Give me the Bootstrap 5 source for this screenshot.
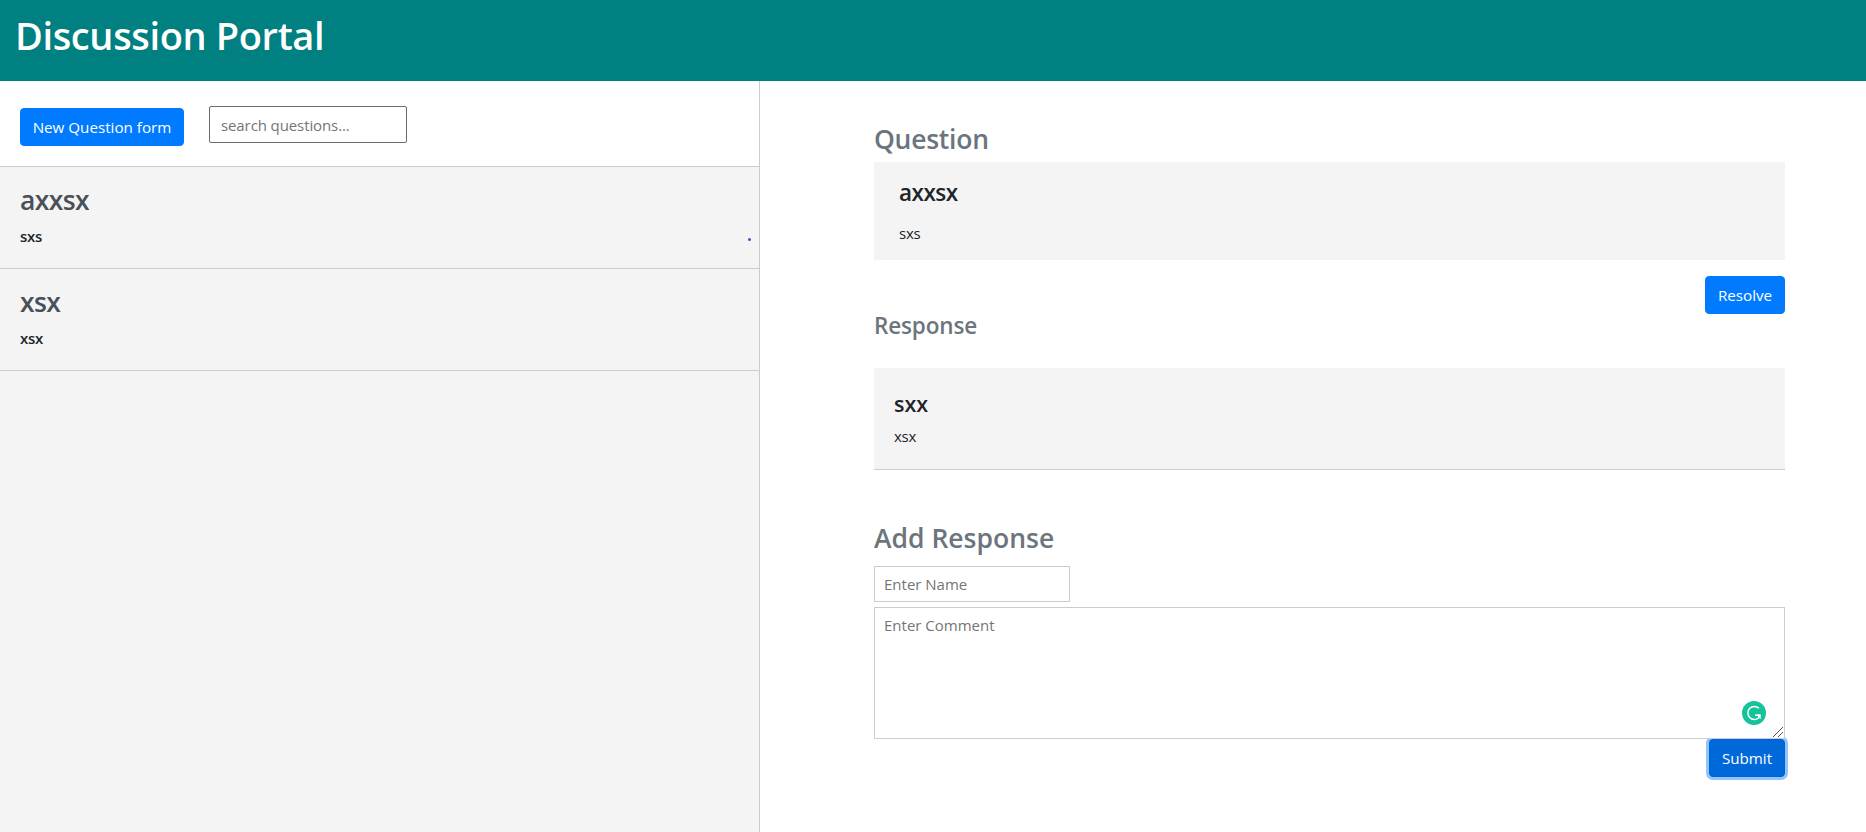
<!DOCTYPE html>
<html lang="en">
<head>
<meta charset="utf-8">
<meta name="viewport" content="width=device-width, initial-scale=1">
<title>Discussion Portal</title>
<link href="https://cdn.jsdelivr.net/npm/bootstrap@5.3.0/dist/css/bootstrap.min.css" rel="stylesheet">
<style>
body{font-family:"Segoe UI","Open Sans","Noto Sans",sans-serif;font-size:15px;line-height:24px;color:#212529;background:#fff}
h1,h2,h3,h4,p{margin:0}
h1,h2,h3,h4{font-weight:600}
.topbar{height:81px;background:teal;padding:11px 15px 0}
.topbar h1{font-size:38px;line-height:48px;letter-spacing:-.36px}
.side{width:760px;background:#f4f4f4;border-right:1px solid #ccc}
.tools{height:86px;background:#fff;border-bottom:1px solid #ccc;padding:25px 20px 0}
.btn{--bs-btn-font-size:15.2px;--bs-btn-line-height:24px;--bs-btn-border-radius:4px;height:38px;padding:6px 0;--bs-btn-bg:#007bff;--bs-btn-border-color:#007bff}
.btn-new{width:164px;margin-top:2px}
.btn-resolve{width:80px}
.btn-submit{width:76px;--bs-btn-bg:#0069d9;--bs-btn-border-color:#0062cc;box-shadow:0 0 0 3px #8fc4ff}
input,textarea{font-size:15px;line-height:24px;border:1px solid #ccc;padding:5px 9px;display:block}
input::placeholder,textarea::placeholder{color:#757575;opacity:1}
.search{width:198px;height:37px;border-color:#6b6b6b;border-radius:2px;margin-left:25px;padding-left:11px;letter-spacing:-.1px}
.item{height:102px;border-bottom:1px solid #ccc;padding:16px 20px 0;position:relative}
.item h2{font-size:26.5px;line-height:34px;color:#495057;letter-spacing:-.6px}
.item p{font-weight:600;line-height:24px;margin-top:7px;letter-spacing:-.3px}
.dot{position:absolute;right:8px;top:71px;width:3px;height:3px;border-radius:50%;background:#5a3fd0}
.main{padding:41px 81px 0 114px}
.sec{font-size:26.5px;line-height:34px;color:#6c757d}
.sec-q{letter-spacing:-.25px}
.sec-r{font-size:22.5px;line-height:29px;margin:-3px 0 28px;letter-spacing:-.15px}
.sec-add{margin:51px 0 11px}
.q{background:#f4f4f4;height:98px;margin-top:6px;padding:16px 25px 0}
.q h3{font-size:22.5px;line-height:29px;letter-spacing:-.5px}
.q p{margin-top:14px;letter-spacing:-.2px}
.resolve-row{margin-top:16px}
.r{background:#f4f4f4;height:102px;border-bottom:1px solid #ccc;padding:22px 20px 0}
.r h4{font-size:21.5px;line-height:27px}
.r p{margin-top:7px;letter-spacing:-.3px}
.name{width:196px;height:36px}
.comment-wrap{margin-top:5px}
.comment{width:100%;height:132px;resize:none}
.gram{position:absolute;right:19px;bottom:14px}
.grip{position:absolute;right:2px;bottom:2px}
</style>
</head>
<body class="vh-100 d-flex flex-column overflow-hidden">
<header class="topbar text-white"><h1>Discussion Portal</h1></header>
<div class="d-flex flex-grow-1">
  <aside class="side flex-shrink-0">
    <div class="tools d-flex align-items-start">
      <button class="btn btn-primary btn-new">New Question form</button>
      <input class="search" type="text" placeholder="search questions...">
    </div>
    <div class="item"><h2>axxsx</h2><p>sxs</p><span class="dot"></span></div>
    <div class="item"><h2>xsx</h2><p>xsx</p></div>
  </aside>
  <main class="main flex-grow-1">
    <h2 class="sec sec-q">Question</h2>
    <section class="q"><h3>axxsx</h3><p>sxs</p></section>
    <div class="d-flex justify-content-end resolve-row"><button class="btn btn-primary btn-resolve">Resolve</button></div>
    <h3 class="sec sec-r">Response</h3>
    <section class="r"><h4>sxx</h4><p>xsx</p></section>
    <h2 class="sec sec-add">Add Response</h2>
    <input class="name" type="text" placeholder="Enter Name">
    <div class="position-relative comment-wrap">
      <textarea class="comment" placeholder="Enter Comment"></textarea>
      <svg class="gram" width="24" height="24" viewBox="0 0 24 24"><circle cx="12" cy="12" r="12" fill="#15c39a"/><path d="M16.9 7.2A6.5 6.5 0 1 0 16.8 16.7L17.6 14.2H13" fill="none" stroke="#fff" stroke-width="1.5"/><path d="M14.3 13.6H18.7V18.2Z" fill="#fff"/></svg>
      <svg class="grip" width="10" height="10" viewBox="0 0 10 10"><path d="M0 10L10 0M5 10L10 5" stroke="#555" stroke-width="1" fill="none"/></svg>
    </div>
    <div class="d-flex justify-content-end"><button class="btn btn-primary btn-submit">Submit</button></div>
  </main>
</div>
<script src="https://cdn.jsdelivr.net/npm/bootstrap@5.3.0/dist/js/bootstrap.bundle.min.js"></script>
</body>
</html>
